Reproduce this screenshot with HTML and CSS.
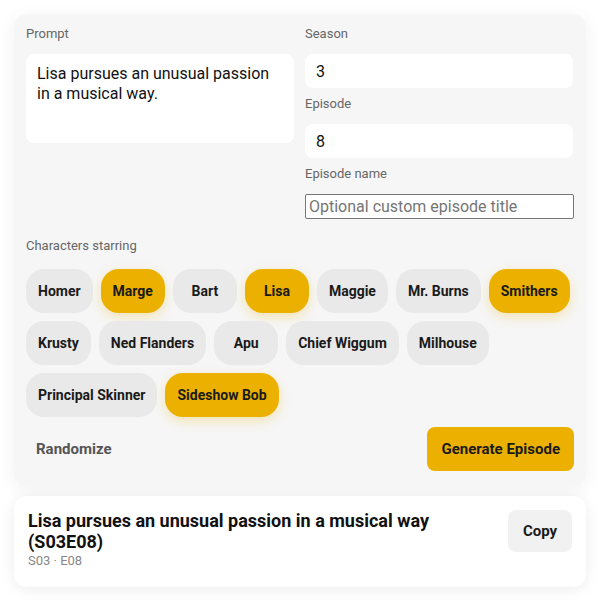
FILE: index.html
```html
<!DOCTYPE html>
<html>
<head>
<meta charset="utf-8">
<link rel="stylesheet" href="styles.css">
</head>
<body>
<div class="page">
  <section class="panel">
    <div class="grid">
      <div class="col">
        <label class="label">Prompt</label>
        <textarea class="textarea">Lisa pursues an unusual passion in a musical way.</textarea>
      </div>
      <div class="col">
        <div class="field">
          <label class="label">Season</label>
          <input class="num" value="3">
        </div>
        <div class="field">
          <label class="label">Episode</label>
          <input class="num" value="8">
        </div>
        <div class="field">
          <label class="label">Episode name</label>
          <input class="plain" placeholder="Optional custom episode title">
        </div>
      </div>
    </div>
    <label class="label chars-label">Characters starring</label>
    <div class="chips">
      <button class="chip">Homer</button>
      <button class="chip on">Marge</button>
      <button class="chip">Bart</button>
      <button class="chip on">Lisa</button>
      <button class="chip">Maggie</button>
      <button class="chip">Mr. Burns</button>
      <button class="chip on">Smithers</button>
      <button class="chip">Krusty</button>
      <button class="chip">Ned Flanders</button>
      <button class="chip">Apu</button>
      <button class="chip">Chief Wiggum</button>
      <button class="chip">Milhouse</button>
      <button class="chip">Principal Skinner</button>
      <button class="chip on">Sideshow Bob</button>
    </div>
    <div class="actions">
      <button class="ghost">Randomize</button>
      <button class="primary">Generate Episode</button>
    </div>
  </section>
  <section class="result">
    <div class="result-text">
      <div class="result-title">Lisa pursues an unusual passion in a musical way (S03E08)</div>
      <div class="result-sub">S03 · E08</div>
    </div>
    <button class="copy">Copy</button>
  </section>
</div>
</body>
</html>
```
FILE: styles.css
```css
* { box-sizing: border-box; }
html, body { margin: 0; padding: 0; background: #ffffff; }
body { font-family: Roboto, "Liberation Sans", sans-serif; color: #111; }
.page { padding: 14px; display: flex; flex-direction: column; gap: 10px; }
.panel {
  background: #f6f6f6;
  border-radius: 14px;
  padding: 12px 12px 15px;
  box-shadow: 0 4px 18px rgba(0,0,0,0.06);
}
.grid { display: grid; grid-template-columns: 268px 268px; column-gap: 11px; align-items: start; }
.col { display: flex; flex-direction: column; }
.field { display: flex; flex-direction: column; margin-bottom: 8px; }
.field:last-child { margin-bottom: 0; }
.label { display: block; font-size: 13px; line-height: 15px; color: #666; margin-bottom: 13px; }
.textarea {
  height: 89px; resize: none; border: none; outline: none;
  border-radius: 8px; background: #fff;
  font-family: inherit; font-size: 16px; line-height: 20px; color: #111;
  padding: 10px 11px;
}
.num {
  height: 34px; border: none; border-radius: 8px; background: #fff;
  font-family: inherit; font-size: 16px; color: #111; padding: 0 11px; outline: none;
}
.plain {
  height: 25px; border: 1px solid #767676; border-radius: 2px; background: #fff;
  font-family: inherit; font-size: 16px; padding: 1px 3px; margin: 0; width: 269px;
}
.plain::placeholder { color: #757575; }
.chars-label { margin-top: 19px; margin-bottom: 16px; }
.chips { display: flex; flex-wrap: wrap; gap: 8px; }
.chip {
  height: 44px; min-width: 64px; padding: 0 12px;
  border: none; border-radius: 18px; background: #e9e9e9;
  font-family: inherit; font-size: 14px; font-weight: 700; color: #1a1a1a;
}
.chip.on { background: #ebb000; box-shadow: 0 4px 12px rgba(235,176,0,0.28); }
.actions { display: flex; justify-content: space-between; align-items: center; margin-top: 10px; }
.ghost {
  border: none; background: transparent; padding: 10px;
  font-family: inherit; font-size: 15px; font-weight: 700; color: #555;
}
.primary {
  height: 44px; padding: 0 14px; border: none; border-radius: 8px; background: #ebb000;
  font-family: inherit; font-size: 15px; font-weight: 700; color: #1a1a1a;
}
.result {
  background: #fff; border-radius: 12px; padding: 14px 14px 18px;
  box-shadow: 0 2px 14px rgba(0,0,0,0.08);
  display: flex; gap: 14px; align-items: flex-start;
}
.result-text { flex: 1; }
.result-title { font-size: 18px; font-weight: 700; line-height: 21px; color: #111; }
.result-sub { font-size: 13px; color: #888; line-height: 16px; margin-top: 1px; }
.copy {
  height: 42px; width: 64px; border: none; border-radius: 8px; background: #f1f1f1;
  font-family: inherit; font-size: 15px; font-weight: 700; color: #1a1a1a;
}
```
